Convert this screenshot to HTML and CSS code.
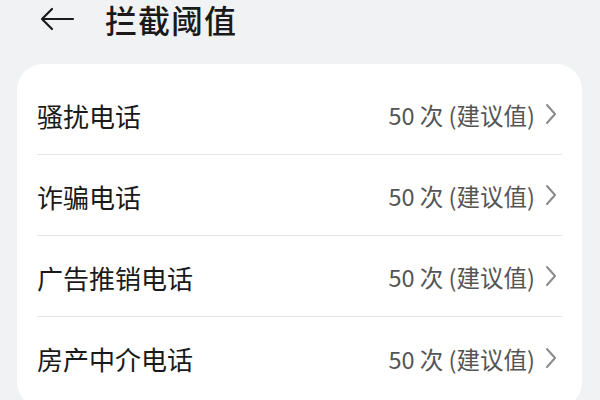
FILE: index.html
```html
<!DOCTYPE html>
<html lang="zh-CN">
<head>
<meta charset="utf-8">
<link rel="stylesheet" href="styles.css">
</head>
<body>
<div class="page">
  <header class="topbar">
    <svg class="back" viewBox="0 0 36 24" width="36" height="24" aria-hidden="true">
      <path d="M34 12H3M13 2L3 12l10 10" fill="none" stroke="#1a1a1a" stroke-width="2.2" stroke-linecap="round" stroke-linejoin="round"/>
    </svg>
    <h1 class="title">拦截阈值</h1>
  </header>
  <section class="card">
    <div class="row">
      <span class="label">骚扰电话</span>
      <span class="value">50 次 (建议值)</span>
      <svg class="chev" viewBox="0 0 12 22" width="12" height="22" aria-hidden="true"><path d="M2 2l8 9-8 9" fill="none" stroke="#8a8a8a" stroke-width="2" stroke-linecap="round" stroke-linejoin="round"/></svg>
    </div>
    <div class="row">
      <span class="label">诈骗电话</span>
      <span class="value">50 次 (建议值)</span>
      <svg class="chev" viewBox="0 0 12 22" width="12" height="22" aria-hidden="true"><path d="M2 2l8 9-8 9" fill="none" stroke="#8a8a8a" stroke-width="2" stroke-linecap="round" stroke-linejoin="round"/></svg>
    </div>
    <div class="row">
      <span class="label">广告推销电话</span>
      <span class="value">50 次 (建议值)</span>
      <svg class="chev" viewBox="0 0 12 22" width="12" height="22" aria-hidden="true"><path d="M2 2l8 9-8 9" fill="none" stroke="#8a8a8a" stroke-width="2" stroke-linecap="round" stroke-linejoin="round"/></svg>
    </div>
    <div class="row last">
      <span class="label">房产中介电话</span>
      <span class="value">50 次 (建议值)</span>
      <svg class="chev" viewBox="0 0 12 22" width="12" height="22" aria-hidden="true"><path d="M2 2l8 9-8 9" fill="none" stroke="#8a8a8a" stroke-width="2" stroke-linecap="round" stroke-linejoin="round"/></svg>
    </div>
  </section>
</div>
</body>
</html>
```
FILE: styles.css
```css
html, body {
  margin: 0;
  padding: 0;
  background: #f1f2f4;
  width: 600px;
  height: 400px;
  overflow: hidden;
  font-family: "Noto Sans CJK SC", "Noto Sans", sans-serif;
}
.page {
  display: flex;
  flex-direction: column;
}
.topbar {
  display: flex;
  align-items: center;
  height: 38px;
  padding-left: 39px;
}
.back {
  display: block;
  flex: none;
}
.title {
  margin: 0 0 0 30px;
  font-size: 32px;
  font-weight: 500;
  color: #1a1a1a;
  line-height: 38px;
  letter-spacing: 1px;
}
.card {
  margin: 26px 18px 0 17px;
  background: #ffffff;
  border-radius: 26px;
  padding: 10px 20px 10px 20px;
}
.row {
  display: flex;
  align-items: center;
  height: 81px;
  border-bottom: 1.5px solid #e6e6e8;
  box-sizing: border-box;
}
.row.last {
  border-bottom: none;
}
.label {
  flex: 1;
  font-size: 26px;
  color: #1a1a1a;
  padding-top: 2px;
}
.value {
  font-size: 23.5px;
  color: #555555;
  margin-right: 10px;
  padding-top: 2px;
}
.chev {
  display: block;
  flex: none;
  margin-right: 5px;
}
```
